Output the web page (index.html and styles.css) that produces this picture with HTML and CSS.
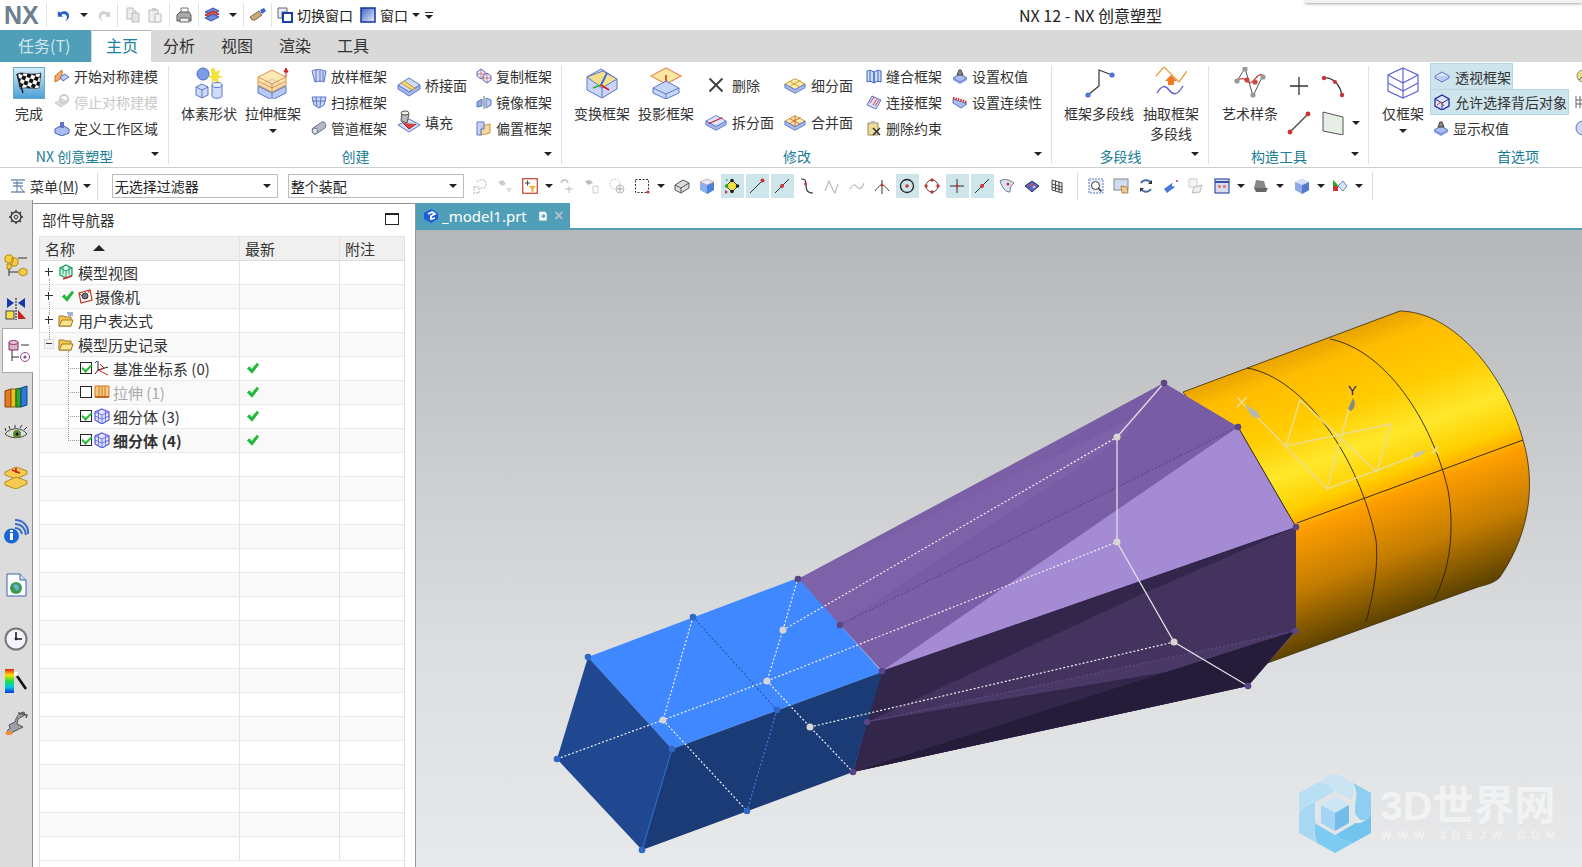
FILE: index.html
```html
<!DOCTYPE html>
<html lang="zh-CN">
<head>
<meta charset="utf-8">
<title>NX 12 - NX 创意塑型</title>
<link rel="stylesheet" href="styles.css">
</head>
<body>
<svg class="sprite" xmlns="http://www.w3.org/2000/svg">
<defs>
<linearGradient id="gflag" x1="0" y1="0" x2="0" y2="1"><stop offset="0" stop-color="#d4eef8"/><stop offset="1" stop-color="#4c9fd6"/></linearGradient>
<linearGradient id="gwin" x1="0" y1="0" x2="1" y2="1"><stop offset="0" stop-color="#3f63c8"/><stop offset="1" stop-color="#e8f2fb"/></linearGradient>
<linearGradient id="gspec" x1="0" y1="0" x2="0" y2="1"><stop offset="0" stop-color="#e02020"/><stop offset=".25" stop-color="#ffe000"/><stop offset=".5" stop-color="#20e040"/><stop offset=".75" stop-color="#00c8e8"/><stop offset="1" stop-color="#1030e0"/></linearGradient>
<pattern id="pchk" width="8" height="8" patternUnits="userSpaceOnUse" patternTransform="rotate(22)"><rect width="8" height="8" fill="#fff"/><rect width="4" height="4" fill="#111"/><rect x="4" y="4" width="4" height="4" fill="#111"/></pattern>
</defs>
<!-- quick access -->
<symbol id="undo" viewBox="0 0 16 16"><path d="M1 4v6h6L5 8c2-2 5-1.500 6 1s0 5-2 6c4-1 6-5 4-9-2-3-6-3-9-1z" fill="#2a62c4"/></symbol>
<symbol id="redo" viewBox="0 0 16 16"><path d="M15 4v6H9l2-2c-2-2-5-1.500-6 1s0 5 2 6c-4-1-6-5-4-9 2-3 6-3 9-1z" fill="#d0d0d0"/></symbol>
<symbol id="copy" viewBox="0 0 16 16"><path d="M2 1h6v3h3v8H2z" fill="#eee" stroke="#bbb"/><path d="M7 6h7v9H7z" fill="#e4e4e4" stroke="#bbb"/></symbol>
<symbol id="paste" viewBox="0 0 16 16"><path d="M2 3h9v12H2z" fill="#eee" stroke="#bbb"/><path d="M5 1h4v3H5z" fill="#ccc"/><path d="M8 7h6v8H8z" fill="#f4f4f4" stroke="#bbb"/></symbol>
<symbol id="print" viewBox="0 0 16 16"><path d="M5 1h7v5H5z" fill="#fff" stroke="#777"/><path d="M1 8l3-3h9l2 3v6H1z" fill="#aaa" stroke="#555"/><path d="M4 11h9v4H4z" fill="#eee" stroke="#666"/></symbol>
<symbol id="stack" viewBox="0 0 16 16"><path d="M1 5l8-4 6 3-8 4z" fill="#6c8be0" stroke="#3350a8"/><path d="M1 8l8-4 6 3-8 4z" fill="#e0564a" stroke="#a22"/><path d="M1 11l8-4 6 3-8 4z" fill="#6c8be0" stroke="#3350a8"/></symbol>
<symbol id="brush" viewBox="0 0 18 16"><path d="M1 10l9-6 3 4-7 5H3z" fill="#c9a878" stroke="#7c6a50"/><path d="M11 3l4-2 2 3-4 3z" fill="#3b63cf"/></symbol>
<symbol id="switch" viewBox="0 0 16 16"><path d="M1 1h9v4H5v6H1z" fill="#e8eef8" stroke="#666"/><path d="M6 6h9v9H6z" fill="#fff" stroke="#1640b0" stroke-width="2"/></symbol>
<symbol id="win" viewBox="0 0 16 16"><rect x="1" y="1" width="14" height="14" fill="url(#gwin)" stroke="#1133a0" stroke-width="1.500"/></symbol>
<!-- ribbon large -->
<symbol id="flag" viewBox="0 0 32 32"><rect x=".5" y=".5" width="31" height="31" fill="url(#gflag)" stroke="#69aacb"/><path d="M4 7c6-3 11 2 24-1l-2 15c-8 2-13-2-19 1z" fill="url(#pchk)" stroke="#222" stroke-width=".6"/><path d="M4 7l6 19" stroke="#222" stroke-width="1.500"/></symbol>
<symbol id="prim" viewBox="0 0 32 32"><circle cx="10" cy="7" r="6" fill="#7c9ce6" stroke="#4a66bb"/><path d="M21 0l1.500 5 5-2-2.500 5 5 2-5 1.500 1.500 5-5-3-3 3 .5-5-4-2 4-1.500-1.500-5z" fill="#f3e23c"/><path d="M3 20l6-3 6 3v8l-6 3-6-3z" fill="#cddaf8" stroke="#5d76c8"/><path d="M3 20l6 3 6-3M9 23v8" fill="none" stroke="#5d76c8"/><path d="M19 18v11c0 3 10 3 10 0V18z" fill="#cfdcf8" stroke="#5d76c8"/><ellipse cx="24" cy="18" rx="5" ry="2.500" fill="#e8effc" stroke="#5d76c8"/></symbol>
<symbol id="extr" viewBox="0 0 32 32"><path d="M1 19l14-7 14 7v7l-14 7-14-7z" fill="#b8c9f5" stroke="#5d76c8"/><path d="M1 19l14 7 14-7M15 26v7" fill="none" stroke="#5d76c8"/><path d="M1 10l14-7 14 7v8l-14 7-14-7z" fill="#fbe4a4" fill-opacity=".8" stroke="#e0904a"/><path d="M1 10l14 7 14-7M15 17v8" fill="none" stroke="#e0904a"/><path d="M1 14l14 7 14-7" fill="none" stroke="#e0904a"/><path d="M29 10V4M27 5l2-4 2 4z" stroke="#d02020" fill="#d02020"/></symbol>
<symbol id="xform" viewBox="0 0 32 32"><path d="M1 10l14-8 16 10v10l-15 9-15-8z" fill="#c9d6f8" stroke="#5d76c8"/><path d="M1 10l15 11 15-9-14-8z" fill="#f4e08a" stroke="#5d76c8"/><path d="M16 21v10" stroke="#5d76c8"/><path d="M15 18l6-12" stroke="#3868d8" stroke-width="1.800"/><path d="M15 18l-8 3" stroke="#39a83c" stroke-width="1.800"/><path d="M15 18l8 5" stroke="#d02020" stroke-width="1.800"/></symbol>
<symbol id="proj" viewBox="0 0 32 32"><path d="M1 9l15-8 15 8-15 8z" fill="#f8e8a0" stroke="#e89068" stroke-width="1.400"/><path d="M16 8v16" stroke="#d02020" stroke-width="1.500"/><circle cx="16" cy="17" r="1.800" fill="#d02020"/><path d="M3 21l13-7 13 7v5l-13 6-13-6z" fill="#c6d6fa" stroke="#5d76c8"/><path d="M3 21l13 6 13-6M16 27v5" fill="none" stroke="#5d76c8"/></symbol>
<symbol id="poly" viewBox="0 0 32 32"><path d="M5 28L16 19V3l13 5" fill="none" stroke="#333" stroke-width="1.200"/><circle cx="5" cy="28" r="2.600" fill="#5570d8"/><circle cx="29" cy="8" r="2.600" fill="#5570d8"/></symbol>
<symbol id="extractp" viewBox="0 0 32 32"><path d="M1 9l8-9 15 15L32 4" fill="none" stroke="#f0a040" stroke-width="1.400"/><path d="M2 26c5-8 8-8 12-3s8 6 14-4" fill="none" stroke="#5d60d0" stroke-width="1.400"/><path d="M13 18v-4h-3l6-6 6 6h-3v4z" fill="#f07820"/></symbol>
<symbol id="spline" viewBox="0 0 32 32"><path d="M3 14L11 1l4 14 4 14 10-21" fill="none" stroke="#555"/><path d="M3 14c3-3 6-3 9-1s4 5 8 0 6-6 9-5" fill="none" stroke="#c33" stroke-width="1.200"/><circle cx="3" cy="14" r="2.600" fill="#999"/><circle cx="11" cy="2" r="2.600" fill="#999"/><circle cx="13" cy="13" r="2.600" fill="#c44"/><circle cx="21" cy="15" r="2.600" fill="#c44"/><circle cx="19" cy="28" r="2.600" fill="#999"/><circle cx="29" cy="10" r="2.600" fill="#999"/></symbol>
<symbol id="cage" viewBox="0 0 32 32"><path d="M16 1l15 7v16l-15 7-15-7V8zM1 8l15 8 15-8M16 16v15M1 16l15 8 15-8M16 1v15" fill="none" stroke="#6266d8" stroke-width="1.200"/></symbol>
<!-- ribbon small -->
<symbol id="symon" viewBox="0 0 16 16"><path d="M1 8l7-6v8l-7 4z" fill="#f5a868" stroke="#d06f20"/><path d="M6 9l5-3 4 3-6 4z" fill="#b9caf4" stroke="#5d76c8"/></symbol>
<symbol id="symoff" viewBox="0 0 16 16"><path d="M1 9l7-4 6 3-7 5z" fill="#ddd" stroke="#ccc"/><circle cx="10" cy="5" r="4" fill="none" stroke="#ccc" stroke-width="2"/></symbol>
<symbol id="workarea" viewBox="0 0 16 16"><path d="M1 9l7-4 7 4v4l-7 3-7-3z" fill="#a9bdf0" stroke="#4b64b8"/><path d="M6 2h4v6H6z" fill="#5d76c8"/></symbol>
<symbol id="loft" viewBox="0 0 16 16"><path d="M1 3c4-2 7-2 14 0l-2 11c-3-1-6-1-9 0z" fill="#ccd8f6" stroke="#5d76c8"/><path d="M5 2v12M9 2v12M12 3v11" stroke="#5d76c8" fill="none"/></symbol>
<symbol id="sweep" viewBox="0 0 16 16"><path d="M1 3h14l-2 8-5 3-5-3z" fill="#ccd8f6" stroke="#5d76c8"/><path d="M1 7h14M5 3l1 10M10 3l-1 10" stroke="#5d76c8" fill="none"/></symbol>
<symbol id="pipe" viewBox="0 0 16 16"><path d="M2 8l9-6c3-1 5 3 3 6l-9 6c-3 1-5-3-3-6z" fill="#b4b8c2" stroke="#6a7190"/><ellipse cx="4" cy="11" rx="2.500" ry="3" fill="#e6e9f3" stroke="#6a7190"/></symbol>
<symbol id="bridge" viewBox="0 0 24 24"><path d="M1 12l11-7 11 7-11 7z" fill="#cfdcf8" stroke="#5d76c8"/><path d="M1 12v4l11 7 11-7v-4l-11 7z" fill="#a5b9ee" stroke="#5d76c8"/><path d="M7 8l11 7-3 2L4 10z" fill="#f5d682" stroke="#c89a30"/></symbol>
<symbol id="fillx" viewBox="0 0 24 24"><path d="M1 15l11-6 11 6-11 7z" fill="#cfdcf8" stroke="#5d76c8"/><path d="M6 13l6 6 7-5" fill="#d84040" stroke="#b02020"/><path d="M5 2l7 2-2 9-6-2z" fill="#bbb" stroke="#555"/><ellipse cx="8" cy="3" rx="4" ry="2" fill="#eee" stroke="#555"/></symbol>
<symbol id="copyc" viewBox="0 0 16 16"><path d="M1 4l4-3 4 3v4l-4 3-4-3z" fill="#e8eefc" stroke="#5266c0"/><path d="M7 8l4-3 4 3v4l-4 3-4-3z" fill="#e8eefc" stroke="#5266c0"/><path d="M5 1v10M1 6h8M11 5v10M7 10h8" stroke="#d05050" stroke-width=".7"/></symbol>
<symbol id="mirror" viewBox="0 0 16 16"><path d="M1 8l5-3v7l-5 1z" fill="#94a9e2" stroke="#5d76c8"/><path d="M8 2v13" stroke="#666"/><path d="M10 4l5 2v5l-5 3z" fill="#b9caf4" stroke="#5d76c8"/></symbol>
<symbol id="offset" viewBox="0 0 16 16"><path d="M5 6l9-2v9l-9 2z" fill="#f5d8a0" stroke="#d09040"/><path d="M1 2h7v7H5v6H1z" fill="#b8c9f5" stroke="#5d76c8" fill-opacity=".8"/></symbol>
<symbol id="del" viewBox="0 0 16 16"><path d="M1.500 1.500l13 13M14.500 1.500l-13 13" stroke="#444" stroke-width="2"/></symbol>
<symbol id="split" viewBox="0 0 24 24"><path d="M1 11l11-6 11 6-11 6z" fill="#dbe6fb" stroke="#5d76c8"/><path d="M1 11v4l11 6 11-6v-4l-11 6z" fill="#a5b9ee" stroke="#5d76c8"/><path d="M4 14L19 7" stroke="#d02020" stroke-width="1.300"/></symbol>
<symbol id="subd" viewBox="0 0 24 24"><path d="M1 11l11-6 11 6-11 6z" fill="#fbe9a8" stroke="#c89a30"/><path d="M1 11v4l11 6 11-6v-4l-11 6z" fill="#a5b9ee" stroke="#5d76c8"/><path d="M6 8l11 6M7 13l11-6" stroke="#c89a30" fill="none"/></symbol>
<symbol id="merge" viewBox="0 0 24 24"><path d="M1 11l11-6 11 6-11 6z" fill="#fbe9a8" stroke="#c89a30"/><path d="M1 11v4l11 6 11-6v-4l-11 6z" fill="#a5b9ee" stroke="#5d76c8"/><path d="M6 8l11 6M7 13l11-6M12 5v12" stroke="#d06030" fill="none"/></symbol>
<symbol id="stitch" viewBox="0 0 16 16"><path d="M1 3c2-1 4-1 7 1v11c-3-2-5-2-7-1zM8 4c3-2 5-2 7-1v11c-2-1-4-1-7 1z" fill="#cfe0f8" stroke="#3a60c0"/><path d="M4 3v11M12 3v11" stroke="#3a60c0"/></symbol>
<symbol id="conn" viewBox="0 0 16 16"><path d="M1 11l5-9 9 4-5 9z" fill="#d4dcf6" stroke="#5d76c8"/><path d="M4 9l4-6M7 11l4-6M9 12l4-6" stroke="#d84a4a" fill="none"/></symbol>
<symbol id="rmc" viewBox="0 0 16 16"><path d="M2 3h10v12H2z" fill="#eedc9c" stroke="#9a8a4a"/><path d="M5 1h4v3H5z" fill="#bbb"/><path d="M7 8l7 7M14 8l-7 7" stroke="#333" stroke-width="1.600"/></symbol>
<symbol id="weight" viewBox="0 0 16 16"><path d="M1 10l7-4 7 4-7 4z" fill="#a9bdf0" stroke="#5d76c8"/><path d="M1 10v2l7 4 7-4v-2l-7 4z" fill="#7f98e0"/><path d="M5 7l2-5h2l2 5z" fill="#888" stroke="#444"/></symbol>
<symbol id="cont" viewBox="0 0 16 16"><path d="M1 5l9 3 5 2-6 4-8-5z" fill="#a9bdf0" stroke="#5d76c8"/><path d="M1 4l11 3 3 2" stroke="#d03030" stroke-width="2.500" stroke-dasharray="1.500 1" fill="none"/></symbol>
<symbol id="plus" viewBox="0 0 24 24"><path d="M12 3v18M3 12h18" stroke="#333" stroke-width="1.300"/></symbol>
<symbol id="arc" viewBox="0 0 24 24"><path d="M3 4c9-1 16 7 18 17" fill="none" stroke="#333" stroke-width="1.300"/><circle cx="3" cy="4" r="2.200" fill="#c33"/><circle cx="14" cy="8" r="2" fill="#c33"/><circle cx="21" cy="21" r="2.200" fill="#c33"/></symbol>
<symbol id="line" viewBox="0 0 24 24"><path d="M3 21L21 3" stroke="#444" stroke-width="1.300"/><circle cx="3" cy="21" r="2.400" fill="#c33"/><circle cx="21" cy="3" r="2.400" fill="#c33"/></symbol>
<symbol id="plane" viewBox="0 0 24 24"><path d="M2 1l20 5v18L2 20z" fill="#e6eee6" stroke="#555"/></symbol>
<symbol id="seeth" viewBox="0 0 16 16"><path d="M1 7l7-4 7 4-7 4z" fill="#dbe6fb" stroke="#5d76c8"/><path d="M1 7v2l7 4 7-4V7" fill="#bccdf6" stroke="#5d76c8"/></symbol>
<symbol id="allow" viewBox="0 0 16 16"><path d="M8 1l7 4v7l-7 4-7-4V5z" fill="#dbe6fb" stroke="#2a2a9a" stroke-width="1.300"/><path d="M1 5l7 4 7-4M8 9v7" fill="none" stroke="#2a2a9a"/><path d="M3 11l4-3 3 4" stroke="#d03030" fill="none"/></symbol>
<symbol id="extra1" viewBox="0 0 16 16"><circle cx="8" cy="8" r="6" fill="#f0e080" stroke="#888"/><path d="M4 12l8-8" stroke="#3060c0"/></symbol>
<symbol id="extra2" viewBox="0 0 16 16"><path d="M1 2v12M5 2v12M9 2v12M13 2v12M1 6h12M1 10h12" stroke="#666" fill="none"/></symbol>
<symbol id="extra3" viewBox="0 0 16 16"><circle cx="8" cy="8" r="7" fill="#cdd8f4" stroke="#5d76c8"/></symbol>
<!-- selection bar -->
<symbol id="menui" viewBox="0 0 16 16"><path d="M1 2h14M3 5h10M3 8h10M1 14h14" stroke="#7894b4" stroke-width="1.400"/><path d="M7 3v11M10 9l4 5" stroke="#5878a0" fill="none"/></symbol>
<symbol id="g1" viewBox="0 0 16 16"><path d="M2 9h5v6H2zM5 4c3-3 8-3 9 1s-3 6-6 5" fill="none" stroke="#c8c8c8" stroke-width="1.400" stroke-dasharray="2 1"/></symbol>
<symbol id="g2" viewBox="0 0 16 16"><path d="M1 4l5-2 3 4-4 2z" fill="#ccc"/><path d="M9 10h6l-3 5z" fill="#ddd"/></symbol>
<symbol id="filter" viewBox="0 0 16 16"><rect x=".7" y=".7" width="14.600" height="14.600" fill="#fff" stroke="#c85040" stroke-width="1.300"/><path d="M3 5h5M5.500 2.500v5" stroke="#444"/><path d="M7 8h7l-2.500 3v3h-2v-3z" fill="#f0b030"/></symbol>
<symbol id="g3" viewBox="0 0 16 16"><path d="M2 5c1-4 6-4 7 0" fill="none" stroke="#bbb" stroke-width="1.400"/><path d="M10 8v7M6 11h8" stroke="#bbb"/></symbol>
<symbol id="g4" viewBox="0 0 16 16"><path d="M1 3l5-1 3 3-5 2z" fill="#bbb"/><path d="M9 8h5v7H9z" fill="none" stroke="#ccc"/></symbol>
<symbol id="g5" viewBox="0 0 16 16"><circle cx="6" cy="6" r="5" fill="none" stroke="#bbb" stroke-dasharray="1.500 1"/><circle cx="11" cy="11" r="4" fill="none" stroke="#bbb"/><path d="M11 8v6M8 11h6" stroke="#aaa"/></symbol>
<symbol id="rect" viewBox="0 0 16 16"><rect x="1.500" y="1.500" width="13" height="13" fill="none" stroke="#333" stroke-dasharray="2 1.500"/><circle cx="14" cy="14" r="1.600" fill="#c33"/></symbol>
<symbol id="part" viewBox="0 0 16 16"><path d="M1 7l8-5 6 3v5l-8 5-6-3z" fill="#ddd" stroke="#555"/><path d="M1 7l6 3 8-5M7 10v5" fill="none" stroke="#555"/></symbol>
<symbol id="cube" viewBox="0 0 16 16"><path d="M8 1l7 3v8l-7 4-7-4V4z" fill="#8ab0ec"/><path d="M8 7l7-3v8l-7 4z" fill="#4d80d8"/><path d="M8 1l7 3-7 3-7-3z" fill="#e0ecfb" stroke="#e08080" stroke-width=".6"/></symbol>
<symbol id="nodes" viewBox="0 0 16 16"><path d="M8 2l6 6-6 6-6-6z" fill="#f0e040" stroke="#444"/><circle cx="8" cy="2.500" r="1.800" fill="#222"/><circle cx="13.500" cy="8" r="1.800" fill="#222"/><circle cx="8" cy="13.500" r="1.800" fill="#222"/><circle cx="2.500" cy="8" r="1.800" fill="#2a2"/><path d="M1 2l2-1 1 2z" fill="#2a2"/><path d="M1 12l3 2-3 2z" fill="#c33"/></symbol>
<symbol id="lend" viewBox="0 0 16 16"><path d="M1 15L14 2" stroke="#333"/><circle cx="13.500" cy="2.500" r="2" fill="#c33"/></symbol>
<symbol id="lmid" viewBox="0 0 16 16"><path d="M1 15L15 1" stroke="#333"/><circle cx="8" cy="8" r="2" fill="#c33"/></symbol>
<symbol id="scurve" viewBox="0 0 16 16"><path d="M2 1c4 0 5 1 5 6s1 8 7 8" fill="none" stroke="#333" stroke-width="1.200"/><circle cx="6.500" cy="6" r="1.400" fill="#c33"/></symbol>
<symbol id="gspl" viewBox="0 0 16 16"><path d="M1 13L5 3l4 9 2 3 3-9" fill="none" stroke="#bbb" stroke-width="1.200"/></symbol>
<symbol id="gwave" viewBox="0 0 16 16"><path d="M1 11c3-5 5-5 7-2s5 2 7-4" fill="none" stroke="#bbb" stroke-width="1.200"/></symbol>
<symbol id="tang" viewBox="0 0 16 16"><path d="M1 13c3-4 5-6 7-6s4 2 7 6M8 2v14" fill="none" stroke="#333"/><circle cx="8" cy="7" r="1.400" fill="#c33"/></symbol>
<symbol id="cdot" viewBox="0 0 16 16"><circle cx="8" cy="8" r="6.500" fill="none" stroke="#222" stroke-width="1.300"/><circle cx="8" cy="8" r="1.800" fill="#c33"/></symbol>
<symbol id="c4" viewBox="0 0 16 16"><circle cx="8" cy="8" r="6" fill="none" stroke="#444"/><circle cx="8" cy="2" r="1.700" fill="#c33"/><circle cx="14" cy="8" r="1.700" fill="#c33"/><circle cx="8" cy="14" r="1.700" fill="#c33"/><circle cx="2" cy="8" r="1.700" fill="#c33"/></symbol>
<symbol id="cross" viewBox="0 0 16 16"><path d="M8 1v14M1 8h14" stroke="#333"/><circle cx="8" cy="8" r="1.500" fill="#c33"/></symbol>
<symbol id="surf" viewBox="0 0 16 16"><path d="M1 3c5-3 10-1 14 2-3 2-4 5-4 9-5 0-8-5-10-11z" fill="#d8e2f8" stroke="#777"/><circle cx="9" cy="6" r="1.500" fill="#c33"/></symbol>
<symbol id="surf2" viewBox="0 0 16 16"><path d="M8 3l7 5-7 6-7-6z" fill="#5568c8" stroke="#334"/><circle cx="7" cy="7" r="1.300" fill="#d44"/><circle cx="10" cy="9" r="1.300" fill="#f0c0c0"/></symbol>
<symbol id="grid" viewBox="0 0 16 16"><path d="M3 2l10 3v10L3 12zM3 6l10 3M3 9l10 3M6.500 3v10M10 4v10" fill="#f2f2f2" stroke="#444"/></symbol>
<symbol id="zoomf" viewBox="0 0 16 16"><rect x="1" y="1" width="14" height="14" fill="#e8eefc" stroke="#6a7fc0" stroke-dasharray="2 1"/><circle cx="7.500" cy="7.500" r="4" fill="#fff" stroke="#333"/><path d="M10.500 10.500l3 3" stroke="#333" stroke-width="1.500"/></symbol>
<symbol id="hand" viewBox="0 0 16 16"><rect x="1" y="1" width="14" height="11" fill="#cfdcf4" stroke="#888"/><path d="M8 8l6 1 1 6H9z" fill="#eec890" stroke="#b08848"/></symbol>
<symbol id="rot" viewBox="0 0 16 16"><path d="M3 5a6 6 0 0 1 10 0M13 11a6 6 0 0 1-10 0" fill="none" stroke="#4a6ca8" stroke-width="2"/><path d="M14 2v4h-4zM2 14v-4h4z" fill="#333"/></symbol>
<symbol id="pan" viewBox="0 0 16 16"><path d="M1 11l8-6 3 4-8 6z" fill="#4a78d8"/><path d="M9 5l3 4-3-1z" fill="#fff"/><circle cx="14" cy="3" r="1" fill="#c33"/></symbol>
<symbol id="gviews" viewBox="0 0 16 16"><path d="M1 1h8v8H1z" fill="#f4f4f4" stroke="#ccc"/><path d="M6 9l8-2-2 7-8 1z" fill="#eee" stroke="#bbb"/></symbol>
<symbol id="layout" viewBox="0 0 16 16"><rect x="1" y="1" width="14" height="14" fill="#d8dff0" stroke="#3a50a0" stroke-width="1.200"/><path d="M1 4h14" stroke="#3a50a0" stroke-width="2"/><path d="M4 7h3v3H4zM9 7h3v3H9z" fill="#d88"/></symbol>
<symbol id="clip" viewBox="0 0 16 16"><path d="M3 2l8 1 2 7H1z" fill="#888"/><path d="M1 10h14l-2 4H3z" fill="#666"/></symbol>
<symbol id="rendr" viewBox="0 0 16 16"><path d="M8 1l7 3v8l-7 4-7-4V4z" fill="#8fa8e4"/><path d="M8 7l7-3v8l-7 4z" fill="#5878cc"/><path d="M8 1l7 3-7 3-7-3z" fill="#d6e2fa"/></symbol>
<symbol id="showh" viewBox="0 0 16 16"><path d="M1 2l5 5-5 6z" fill="#2a2"/><path d="M1 8h5v5H1z" fill="#c33"/><path d="M6 8l5-5 4 5-4 5z" fill="#d6e2fa" stroke="#6a7fc0"/></symbol>
<!-- tree -->
<symbol id="viewsm" viewBox="0 0 16 16"><path d="M8 1l6 3v7l-6 3-6-3V4z" fill="#e4f5ea" stroke="#1aa066" stroke-width="1.300"/><path d="M2 4l6 3 6-3M8 7v7M5 2.500v8M11 2.500v8" fill="none" stroke="#1aa066"/><path d="M5 15l9-3" stroke="#d83020" stroke-width="1.500"/></symbol>
<symbol id="chk" viewBox="0 0 16 16"><path d="M1 8.500L4 6l2.500 3 6-7L15 4 7 14.500z" fill="#22b83a"/></symbol>
<symbol id="cam" viewBox="0 0 16 16"><path d="M2 5l11-3 2 10-11 3z" fill="#fff" stroke="#c83020" stroke-width="1.200"/><circle cx="8" cy="8" r="3" fill="#778" stroke="#334"/><path d="M2 5l3 3M13 2l-2 3" stroke="#c83020"/></symbol>
<symbol id="fold" viewBox="0 0 16 16"><path d="M1 4h5l1 1h6v9H1z" fill="#f6c850" stroke="#a07820"/><path d="M1 14l3-6h11l-2 6z" fill="#fce48c" stroke="#a07820"/><path d="M9 1h6M10 3h5" stroke="#5060a0"/></symbol>
<symbol id="foldo" viewBox="0 0 16 16"><path d="M1 4h5l1 1h6v9H1z" fill="#f6c850" stroke="#a07820"/><path d="M1 14l3-6h11l-2 6z" fill="#fce48c" stroke="#a07820"/></symbol>
<symbol id="csys" viewBox="0 0 16 16"><path d="M4 1v9l-3 4M4 10l10-3" fill="none" stroke="#222"/><path d="M4 10l6 3 4 2M6 4l4 4-4 2" fill="none" stroke="#d02020"/><path d="M1 3l2-2" stroke="#3050c0"/></symbol>
<symbol id="extrsm" viewBox="0 0 16 16"><path d="M1 2h14v11H1z" fill="#f6cc80" stroke="#d07820"/><path d="M5 2v11M8 2v11M11 2v11" stroke="#d07820"/><path d="M1 13h14" stroke="#c05010" stroke-width="1.500"/></symbol>
<symbol id="subbody" viewBox="0 0 16 16"><path d="M8 1l7 3v8l-7 4-7-4V4z" fill="#dfe4fb" stroke="#5a5ad8" stroke-width="1.200"/><path d="M1 4l7 3 7-3M8 7v9M4.500 2.500v11M11.500 2.500v11M1 8l7 3 7-3" fill="none" stroke="#5a5ad8" stroke-width=".8"/></symbol>
<symbol id="model" viewBox="0 0 16 16"><path d="M8 1l7 4v6l-7 4-7-4V5z" fill="#1d5ce0"/><path d="M5 6l4-2 3 2-4 2v3l4-1" fill="none" stroke="#fff" stroke-width="1.800"/></symbol>
<symbol id="docmark" viewBox="0 0 16 16"><path d="M2 1h9l3 3v11H2z" fill="#fff"/><path d="M5 8h6M8 5l3 3-3 3" fill="none" stroke="#4f9fb8" stroke-width="2"/></symbol>
<!-- rail -->
<symbol id="gear" viewBox="0 0 16 16"><circle cx="8" cy="8" r="5" fill="none" stroke="#333" stroke-width="1.400"/><circle cx="8" cy="8" r="1.800" fill="none" stroke="#333"/><path d="M8 1v2M8 13v2M1 8h2M13 8h2M3 3l1.500 1.500M11.500 11.500L13 13M13 3l-1.500 1.500M4.500 11.500L3 13" stroke="#333" stroke-width="1.400"/></symbol>
<symbol id="r-asm" viewBox="0 0 24 24"><path d="M3 2h4l2 2v4l-2 2H3L1 8V4zM8 5h4l2 2v4l-2 2H8zM3 11h4v5H3z" fill="#f4cc44" stroke="#b08818"/><path d="M5 16v7M5 19h9M14 5h9" stroke="#333"/><path d="M15 17l4-2 4 2v4l-4 2-4-2z" fill="#f4cc44" stroke="#b08818"/></symbol>
<symbol id="r-con" viewBox="0 0 24 24"><path d="M3 1l7 5-7 5zM21 1l-7 5 7 5z" fill="#1838b0"/><path d="M12 1v22" stroke="#111" stroke-dasharray="2 1"/><rect x="2" y="14" width="8" height="8" fill="#f0e050" stroke="#444"/><path d="M14 22l8 0-8-9z" fill="#c82020"/></symbol>
<symbol id="r-nav" viewBox="0 0 24 24"><path d="M3 3h9v8H3z" fill="#d8b4cc" stroke="#8a3060"/><ellipse cx="7.500" cy="3.500" rx="4.500" ry="2" fill="#e8c8dc" stroke="#8a3060"/><path d="M6 11v11M6 18h7M15 6h8" stroke="#333"/><circle cx="19" cy="18" r="4.500" fill="#fff" stroke="#8a4a8a"/><circle cx="19" cy="18" r="1.600" fill="#8a4a8a"/></symbol>
<symbol id="r-books" viewBox="0 0 24 24"><path d="M1 6l6-2v18H1z" fill="#e87820" stroke="#884010"/><path d="M7 4h5v18H7z" fill="#e8c020" stroke="#886010"/><path d="M12 4l5-1v19h-5z" fill="#30a830" stroke="#106010"/><path d="M17 3l6-2v19l-6 2z" fill="#3078d8" stroke="#104888"/></symbol>
<symbol id="r-eye" viewBox="0 0 24 16"><path d="M1 9c5-7 17-7 22 0-6 5-16 5-22 0z" fill="#dde0d6" stroke="#444"/><circle cx="13" cy="9" r="4" fill="#5c8a30"/><circle cx="13" cy="9" r="1.500" fill="#111"/><path d="M2 6L1 3M6 4L5 1M11 3V0M16 3l2-3M20 5l3-3" stroke="#333"/></symbol>
<symbol id="r-slabs" viewBox="0 0 24 24"><path d="M1 7l11-5 11 4v3l-11 5-11-4z" fill="#f6cc50" stroke="#b88820"/><path d="M1 17l11-5 11 4v3l-11 5-11-4z" fill="#f6cc50" stroke="#b88820"/><path d="M8 5l8 3M12 3v5" stroke="#d02020" stroke-width="1.600"/></symbol>
<symbol id="r-info" viewBox="0 0 26 26"><circle cx="8.500" cy="17" r="7.500" fill="#1a66d8"/><path d="M7 14h3v7H7zM7 11h3v2H7z" fill="#fff"/><path d="M12 5c6 0 10 4 11 11M12 1c8 0 14 6 13 14M12 9c4 0 6 2 7 6" fill="none" stroke="#3a70c8" stroke-width="2"/></symbol>
<symbol id="r-doc" viewBox="0 0 24 24"><path d="M3 1h13l6 6v16H3z" fill="#fff" stroke="#3a60b0"/><path d="M16 1v6h6" fill="#cde" stroke="#3a60b0"/><circle cx="12" cy="15" r="6" fill="#3a9a50"/><path d="M9 12c3-2 6 0 6 3s-3 3-4 1z" fill="#6ab0d8"/></symbol>
<symbol id="r-clock" viewBox="0 0 24 24"><circle cx="12" cy="12" r="10.500" fill="#f2f6fb" stroke="#777" stroke-width="2"/><path d="M12 5v7h6" fill="none" stroke="#222" stroke-width="1.600"/><circle cx="12" cy="12" r="1.400" fill="#222"/></symbol>
<symbol id="r-color" viewBox="0 0 24 24"><rect x="1" y="0" width="9" height="24" fill="url(#gspec)"/><path d="M13 7l9 13" stroke="#111" stroke-width="2.600"/><circle cx="12" cy="5" r="2" fill="#fff"/></symbol>
<symbol id="r-tools" viewBox="0 0 24 24"><path d="M20 1c-6 1-8 6-9 10l-6 3 1 3-3 3 4 2 12-6-6-3 1-5 7-4z" fill="#9aa0aa" stroke="#555"/><path d="M14 2l9 2-1 3" fill="none" stroke="#555" stroke-width="1.400"/><ellipse cx="5" cy="22" rx="3.500" ry="2" fill="#f0902c"/></symbol>
</svg>

<div class="app">
  <div class="top-shadow"></div>
  <header class="titlebar">
    <span class="nx">NX</span>
    <span class="sep ml7"></span>
    <svg class="ic14 ml10"><use href="#undo"/></svg>
    <span class="caret ml9"></span>
    <svg class="ic14 ml9"><use href="#redo"/></svg>
    <span class="sep ml6"></span>
    <svg class="ic16 ml7"><use href="#copy"/></svg>
    <svg class="ic16 ml6"><use href="#paste"/></svg>
    <span class="sep ml6"></span>
    <svg class="ic16 ml6"><use href="#print"/></svg>
    <span class="sep ml6"></span>
    <svg class="ic16 ml5"><use href="#stack"/></svg>
    <span class="caret ml9"></span>
    <span class="sep ml6"></span>
    <svg class="ic18 ml5"><use href="#brush"/></svg>
    <span class="sep ml4"></span>
    <svg class="ic16 ml5"><use href="#switch"/></svg>
    <span class="qat-text ml4">切换窗口</span>
    <svg class="ic16 ml7"><use href="#win"/></svg>
    <span class="qat-text ml4">窗口</span>
    <span class="caret ml4"></span>
    <span class="overflow ml5"></span>
    <span class="title">NX 12 - NX 创意塑型</span>
  </header>

  <nav class="tabs">
    <div class="tab-task">任务(T)</div>
    <div class="tab tab-home">主页</div>
    <div class="tab">分析</div>
    <div class="tab">视图</div>
    <div class="tab">渲染</div>
    <div class="tab">工具</div>
  </nav>

  <section class="ribbon">
    <div class="group g-nx">
      <div class="group-body">
        <div class="big big-finish"><div class="big-ic"><svg class="ic32"><use href="#flag"/></svg></div><span>完成</span></div>
        <div class="col c26">
          <div class="row"><svg class="ic16"><use href="#symon"/></svg><span>开始对称建模</span></div>
          <div class="row off"><svg class="ic16"><use href="#symoff"/></svg><span>停止对称建模</span></div>
          <div class="row"><svg class="ic16"><use href="#workarea"/></svg><span>定义工作区域</span></div>
        </div>
      </div>
      <div class="foot foot-std"><span>NX 创意塑型</span><i class="caret foot-caret"></i></div>
    </div>

    <div class="group g-create">
      <div class="group-body">
        <div class="big ml8"><div class="big-ic"><svg class="ic32"><use href="#prim"/></svg></div><span>体素形状</span></div>
        <div class="big"><div class="big-ic"><svg class="ic32"><use href="#extr"/></svg></div><span>拉伸框架</span><i class="caret big-caret"></i></div>
        <div class="col c26 ml6">
          <div class="row"><svg class="ic16"><use href="#loft"/></svg><span>放样框架</span></div>
          <div class="row"><svg class="ic16"><use href="#sweep"/></svg><span>扫掠框架</span></div>
          <div class="row"><svg class="ic16"><use href="#pipe"/></svg><span>管道框架</span></div>
        </div>
        <div class="col c37 ml10">
          <div class="row"><svg class="ic24"><use href="#bridge"/></svg><span>桥接面</span></div>
          <div class="row"><svg class="ic24"><use href="#fillx"/></svg><span>填充</span></div>
        </div>
        <div class="col c26 ml9">
          <div class="row"><svg class="ic16"><use href="#copyc"/></svg><span>复制框架</span></div>
          <div class="row"><svg class="ic16"><use href="#mirror"/></svg><span>镜像框架</span></div>
          <div class="row"><svg class="ic16"><use href="#offset"/></svg><span>偏置框架</span></div>
        </div>
      </div>
      <div class="foot foot-std"><span>创建</span><i class="caret foot-caret"></i></div>
    </div>

    <div class="group g-modify">
      <div class="group-body">
        <div class="big ml8"><div class="big-ic"><svg class="ic32"><use href="#xform"/></svg></div><span>变换框架</span></div>
        <div class="big"><div class="big-ic"><svg class="ic32"><use href="#proj"/></svg></div><span>投影框架</span></div>
        <div class="col c37 ml7 w69">
          <div class="row gap5"><span class="slot22"><svg class="ic16"><use href="#del"/></svg></span><span>删除</span></div>
          <div class="row gap5"><svg class="ic22"><use href="#split"/></svg><span>拆分面</span></div>
        </div>
        <div class="col c37 ml10">
          <div class="row gap5"><svg class="ic22"><use href="#subd"/></svg><span>细分面</span></div>
          <div class="row gap5"><svg class="ic22"><use href="#merge"/></svg><span>合并面</span></div>
        </div>
        <div class="col c26 ml13">
          <div class="row"><svg class="ic16"><use href="#stitch"/></svg><span>缝合框架</span></div>
          <div class="row"><svg class="ic16"><use href="#conn"/></svg><span>连接框架</span></div>
          <div class="row"><svg class="ic16"><use href="#rmc"/></svg><span>删除约束</span></div>
        </div>
        <div class="col c26 ml10">
          <div class="row"><svg class="ic16"><use href="#weight"/></svg><span>设置权值</span></div>
          <div class="row"><svg class="ic16"><use href="#cont"/></svg><span>设置连续性</span></div>
        </div>
      </div>
      <div class="foot foot-std"><span>修改</span><i class="caret foot-caret"></i></div>
    </div>

    <div class="group g-poly">
      <div class="group-body">
        <div class="big big-w70 ml12"><div class="big-ic"><svg class="ic32"><use href="#poly"/></svg></div><span>框架多段线</span></div>
        <div class="big ml5"><div class="big-ic"><svg class="ic32"><use href="#extractp"/></svg></div><span>抽取框架</span><span>多段线</span></div>
      </div>
      <div class="foot foot-std"><span>多段线</span><i class="caret foot-caret"></i></div>
    </div>

    <div class="group g-cons">
      <div class="group-body">
        <div class="big ml9"><div class="big-ic"><svg class="ic32"><use href="#spline"/></svg></div><span>艺术样条</span></div>
        <div class="tools-grid">
          <svg class="ic24"><use href="#plus"/></svg>
          <svg class="ic24"><use href="#arc"/></svg>
          <span></span>
          <svg class="ic24"><use href="#line"/></svg>
          <svg class="ic24"><use href="#plane"/></svg>
          <i class="caret"></i>
        </div>
      </div>
      <div class="foot foot-std"><span>构造工具</span><i class="caret foot-caret"></i></div>
    </div>

    <div class="group g-pref">
      <div class="group-body">
        <div class="big big-w50 ml9"><div class="big-ic"><svg class="ic32"><use href="#cage"/></svg></div><span>仅框架</span><i class="caret big-caret"></i></div>
        <div class="col c26 ml2 pref-col">
          <div class="row on on1"><svg class="ic16"><use href="#seeth"/></svg><span>透视框架</span></div>
          <div class="row on"><svg class="ic16"><use href="#allow"/></svg><span>允许选择背后对象</span></div>
          <div class="row plain"><svg class="ic16"><use href="#weight"/></svg><span>显示权值</span></div>
        </div>
        <div class="col c26 ml6">
          <div class="row"><svg class="ic16"><use href="#extra1"/></svg></div>
          <div class="row"><svg class="ic16"><use href="#extra2"/></svg></div>
          <div class="row"><svg class="ic16"><use href="#extra3"/></svg></div>
        </div>
      </div>
      <div class="foot foot-pref"><span>首选项</span></div>
    </div>
  </section>

  <section class="toolbar">
    <svg class="ic16 ml10"><use href="#menui"/></svg>
    <span class="menu-text ml4">菜单(<u>M</u>)</span>
    <span class="caret ml4"></span>
    <span class="sep sep-tb ml6"></span>
    <div class="select s1"><span>无选择过滤器</span><i class="caret"></i></div>
    <div class="select s2"><span>整个装配</span><i class="caret"></i></div>
    <div class="ti ml4"><svg class="ic16"><use href="#g1"/></svg></div>
    <div class="ti"><svg class="ic16"><use href="#g2"/></svg></div>
    <div class="ti"><svg class="ic16"><use href="#filter"/></svg></div>
    <div class="ta"><i class="caret"></i></div>
    <div class="ti"><svg class="ic16"><use href="#g3"/></svg></div>
    <div class="ti"><svg class="ic16"><use href="#g4"/></svg></div>
    <div class="ti"><svg class="ic16"><use href="#g5"/></svg></div>
    <div class="ti"><svg class="ic16"><use href="#rect"/></svg></div>
    <div class="ta"><i class="caret"></i></div>
    <div class="ti ml3"><svg class="ic16"><use href="#part"/></svg></div>
    <div class="ti"><svg class="ic16"><use href="#cube"/></svg></div>
    <div class="ti act"><svg class="ic18"><use href="#nodes"/></svg></div>
    <div class="ti act"><svg class="ic16"><use href="#lend"/></svg></div>
    <div class="ti act"><svg class="ic16"><use href="#lmid"/></svg></div>
    <div class="ti"><svg class="ic16"><use href="#scurve"/></svg></div>
    <div class="ti"><svg class="ic16"><use href="#gspl"/></svg></div>
    <div class="ti"><svg class="ic16"><use href="#gwave"/></svg></div>
    <div class="ti"><svg class="ic16"><use href="#tang"/></svg></div>
    <div class="ti act"><svg class="ic16"><use href="#cdot"/></svg></div>
    <div class="ti"><svg class="ic16"><use href="#c4"/></svg></div>
    <div class="ti act"><svg class="ic16"><use href="#cross"/></svg></div>
    <div class="ti act"><svg class="ic16"><use href="#lmid"/></svg></div>
    <div class="ti"><svg class="ic16"><use href="#surf"/></svg></div>
    <div class="ti"><svg class="ic16"><use href="#surf2"/></svg></div>
    <div class="ti"><svg class="ic16"><use href="#grid"/></svg></div>
    <span class="sep sep-tb ml7"></span>
    <div class="ti ml6"><svg class="ic16"><use href="#zoomf"/></svg></div>
    <div class="ti"><svg class="ic16"><use href="#hand"/></svg></div>
    <div class="ti"><svg class="ic16"><use href="#rot"/></svg></div>
    <div class="ti"><svg class="ic16"><use href="#pan"/></svg></div>
    <div class="ti"><svg class="ic16"><use href="#gviews"/></svg></div>
    <div class="ti ml1"><svg class="ic16"><use href="#layout"/></svg></div>
    <div class="ta"><i class="caret"></i></div>
    <div class="ti ml2"><svg class="ic16"><use href="#clip"/></svg></div>
    <div class="ta"><i class="caret"></i></div>
    <div class="ti ml4"><svg class="ic16"><use href="#rendr"/></svg></div>
    <div class="ta"><i class="caret"></i></div>
    <div class="ti ml1"><svg class="ic16"><use href="#showh"/></svg></div>
    <div class="ta"><i class="caret"></i></div>
    <span class="sep sep-tb ml7"></span>
  </section>

  <main class="main">
    <aside class="rail">
      <div class="rail-i"><svg class="ic16"><use href="#gear"/></svg></div>
      <div class="rail-i"><svg class="ic24"><use href="#r-asm"/></svg></div>
      <div class="rail-i"><svg class="ic24"><use href="#r-con"/></svg></div>
      <div></div>
      <div class="rail-i rail-active"><svg class="ic24"><use href="#r-nav"/></svg></div>
      <div class="rail-i"><svg class="ic24"><use href="#r-books"/></svg></div>
      <div class="rail-i"><svg class="ic24"><use href="#r-eye"/></svg></div>
      <div class="rail-i"><svg class="ic24"><use href="#r-slabs"/></svg></div>
      <div class="rail-i"><svg class="ic26"><use href="#r-info"/></svg></div>
      <div class="rail-i"><svg class="ic24"><use href="#r-doc"/></svg></div>
      <div class="rail-i"><svg class="ic24"><use href="#r-clock"/></svg></div>
      <div class="rail-i"><svg class="ic24"><use href="#r-color"/></svg></div>
      <div class="rail-i"><svg class="ic24"><use href="#r-tools"/></svg></div>
    </aside>

    <section class="panel">
      <div class="panel-head"><span>部件导航器</span><i class="maximize"></i></div>
      <div class="tree">
        <div class="tree-head">
          <div class="cell cell-name">名称<i class="sort"></i></div>
          <div class="cell">最新</div>
          <div class="cell">附注</div>
        </div>
        <div class="tree-body">
          <i class="vline vl-a"></i>
          <i class="vline vl-b"></i>
          <div class="tr"><div class="cell"><i class="exp"></i><i class="hd"></i><svg class="ic16"><use href="#viewsm"/></svg><span class="ml4">模型视图</span></div><div class="cell"></div><div class="cell"></div></div>
          <div class="tr"><div class="cell"><i class="exp"></i><svg class="ic14 ml7"><use href="#chk"/></svg><svg class="ic16 ml2"><use href="#cam"/></svg><span class="ml2">摄像机</span></div><div class="cell"></div><div class="cell"></div></div>
          <div class="tr"><div class="cell"><i class="exp"></i><i class="hd"></i><svg class="ic16"><use href="#fold"/></svg><span class="ml4">用户表达式</span></div><div class="cell"></div><div class="cell"></div></div>
          <div class="tr"><div class="cell"><i class="exp minus"></i><i class="hd"></i><svg class="ic16"><use href="#foldo"/></svg><span class="ml4">模型历史记录</span></div><div class="cell"></div><div class="cell"></div></div>
          <div class="tr"><div class="cell"><i class="hd2"></i><i class="cb on"></i><svg class="ic16 ml2"><use href="#csys"/></svg><span class="ml3">基准坐标系 (0)</span></div><div class="cell"><svg class="ic14 ok"><use href="#chk"/></svg></div><div class="cell"></div></div>
          <div class="tr"><div class="cell dim"><i class="hd2"></i><i class="cb"></i><svg class="ic16 ml2"><use href="#extrsm"/></svg><span class="ml3">拉伸 (1)</span></div><div class="cell"><svg class="ic14 ok"><use href="#chk"/></svg></div><div class="cell"></div></div>
          <div class="tr"><div class="cell"><i class="hd2"></i><i class="cb on"></i><svg class="ic16 ml2"><use href="#subbody"/></svg><span class="ml3">细分体 (3)</span></div><div class="cell"><svg class="ic14 ok"><use href="#chk"/></svg></div><div class="cell"></div></div>
          <div class="tr"><div class="cell strong"><i class="hd2"></i><i class="cb on"></i><svg class="ic16 ml2"><use href="#subbody"/></svg><span class="ml3">细分体 (4)</span></div><div class="cell"><svg class="ic14 ok"><use href="#chk"/></svg></div><div class="cell"></div></div>
          <div class="tr"><div class="cell"></div><div class="cell"></div><div class="cell"></div></div>
          <div class="tr"><div class="cell"></div><div class="cell"></div><div class="cell"></div></div>
          <div class="tr"><div class="cell"></div><div class="cell"></div><div class="cell"></div></div>
          <div class="tr"><div class="cell"></div><div class="cell"></div><div class="cell"></div></div>
          <div class="tr"><div class="cell"></div><div class="cell"></div><div class="cell"></div></div>
          <div class="tr"><div class="cell"></div><div class="cell"></div><div class="cell"></div></div>
          <div class="tr"><div class="cell"></div><div class="cell"></div><div class="cell"></div></div>
          <div class="tr"><div class="cell"></div><div class="cell"></div><div class="cell"></div></div>
          <div class="tr"><div class="cell"></div><div class="cell"></div><div class="cell"></div></div>
          <div class="tr"><div class="cell"></div><div class="cell"></div><div class="cell"></div></div>
          <div class="tr"><div class="cell"></div><div class="cell"></div><div class="cell"></div></div>
          <div class="tr"><div class="cell"></div><div class="cell"></div><div class="cell"></div></div>
          <div class="tr"><div class="cell"></div><div class="cell"></div><div class="cell"></div></div>
          <div class="tr"><div class="cell"></div><div class="cell"></div><div class="cell"></div></div>
          <div class="tr"><div class="cell"></div><div class="cell"></div><div class="cell"></div></div>
          <div class="tr"><div class="cell"></div><div class="cell"></div><div class="cell"></div></div>
          <div class="tr"><div class="cell"></div><div class="cell"></div><div class="cell"></div></div>
        </div>
      </div>
    </section>

    <section class="viewport">
      <div class="doc-strip">
        <div class="doc-tab"><svg class="ic16"><use href="#model"/></svg><span>_model1.prt</span><svg class="ic10"><use href="#docmark"/></svg><b>×</b></div>
      </div>
      <svg class="scene" viewBox="416 230 1166 637">
        <defs>
          <linearGradient id="gcyl" gradientUnits="userSpaceOnUse" x1="1290" y1="352" x2="1388" y2="618">
            <stop offset="0" stop-color="#e8a400"/><stop offset=".08" stop-color="#ffbc00"/><stop offset=".25" stop-color="#ffcc00"/><stop offset=".4" stop-color="#ffe82c"/><stop offset=".52" stop-color="#ffd000"/><stop offset=".575" stop-color="#ffb000"/><stop offset=".6" stop-color="#ff9e00"/><stop offset=".8" stop-color="#c47c00"/><stop offset="1" stop-color="#5f4400"/>
          </linearGradient>
        </defs>
        <!-- cylinder -->
        <path d="M1183 392L1400 311C1455 312 1505 375 1523 440C1535 480 1532 530 1500 577C1495 583 1485 585 1478 587L1262 665L1290 530Z" fill="url(#gcyl)" stroke="#3a2a08" stroke-width=".8"/>
        <path d="M1247 368C1305 378 1360 460 1376 540C1378 560 1376 585 1366 622" class="s-ring"/>
        <path d="M1330 339C1385 350 1432 420 1448 490C1455 530 1450 570 1434 600" class="s-ring"/>
        <path d="M1297 523L1523 440" class="s-ring"/>
        <!-- triad -->
        <g class="s-triad">
          <path d="M1255 415L1327 489L1350 405M1327 489L1415 456M1286 446L1300 400L1377 472L1391 424L1286 446"/>
          <path d="M1237 397l9 10M1247 397l-10 10M1431 446l8 8M1439 446l-8 8"/>
        </g>
        <path d="M1244 404l14 8 2 6-8-1z" fill="#b8b8a8"/>
        <path d="M1348 409l5-11 2 4-1 6-3 3z" fill="#8a8a88"/>
        <path d="M1414 453l13-3-9 7-4 0z" fill="#c4c4bc"/>
        <text x="1348" y="395" class="s-y">Y</text>

        <!-- purple body -->
        <path d="M798 579L1164 383L1238 427L1296 527L1296 631L1248 686L853 772L867 722L882 671Z" fill="#7a5fa6"/>
        <path d="M840 625L1238 427L1164 383L1100 418Z" fill="#785ca5"/>
        <path d="M840 625L1120 440L1164 383L1130 420L798 579Z" fill="#7d62a9"/>
        <path d="M882 671L1238 427L1296 527Z" fill="#a58bd3"/>
        <path d="M882 671L1296 527V631L867 722Z" fill="#44335f"/>
        <path d="M882 671L1296 527L1140 595L867 722Z" fill="#33264b"/>
        <path d="M867 722L1295 631L1248 686L853 772Z" fill="#33264b"/>
        <path d="M867 722L1295 631L1190 668Z" fill="#4a3966"/>
        <path d="M853 772L1295 631L1248 686Z" fill="#251c39"/>
        <path d="M1238 427L1296 527" class="s-ring"/>
        <!-- blue body -->
        <path d="M588 657L798 578L882 672L672 749Z" fill="#3f88ff"/>
        <path d="M588 657L672 749L642 850L557 759Z" fill="#1f4891"/>
        <path d="M672 749L882 672L853 772L642 850Z" fill="#1a3b76"/>
        <!-- cage lines -->
        <path d="M672 749L642 850" class="s-solid-blue"/>
        <path d="M693 617L777 710" class="s-dash s-d-blue"/>
        <path d="M777 710L747 811" class="s-dash s-d-lblue"/>
        <path d="M840 625L1238 427M867 722L1295 631" class="s-dash s-d-purple"/>
        <path d="M557 759L663 720L767 681L1117 542M783 630L1117 437M663 720L747 811M767 681L810 727L853 772M810 727L1174 642M693 617L663 720M798 578L783 630L767 681" class="s-dash"/>
        <path d="M1164 383L1117 437V542L1174 642L1248 686" class="s-cage"/>
        <!-- vertices -->
        <g class="s-v-blue"><circle cx="588" cy="657" r="3.300"/><circle cx="693" cy="617" r="3.300"/><circle cx="672" cy="749" r="3.300"/><circle cx="777" cy="710" r="3.300"/><circle cx="642" cy="850" r="3.300"/><circle cx="557" cy="759" r="3.300"/><circle cx="747" cy="811" r="3.300"/></g>
        <g class="s-v-purple"><circle cx="798" cy="579" r="3.300"/><circle cx="840" cy="625" r="3.300"/><circle cx="882" cy="671" r="3.300"/><circle cx="867" cy="722" r="3.300"/><circle cx="853" cy="772" r="3.300"/><circle cx="1164" cy="383" r="3.300"/><circle cx="1238" cy="427" r="3.300"/><circle cx="1296" cy="527" r="3.300"/><circle cx="1295" cy="631" r="3.300"/><circle cx="1248" cy="686" r="3.300"/></g>
        <g class="s-v-light"><circle cx="663" cy="720" r="3.500"/><circle cx="767" cy="681" r="3.500"/><circle cx="783" cy="630" r="3.500"/><circle cx="810" cy="727" r="3.500"/><circle cx="1117" cy="437" r="3.500"/><circle cx="1117" cy="542" r="3.500"/><circle cx="1174" cy="642" r="3.500"/></g>
        <!-- watermark -->
        <g>
          <path d="M1335 773L1353 783C1356 795 1350 805 1345 802L1335 793L1317 793C1312 788 1320 778 1335 773Z" fill="#cbe4f4"/>
          <path d="M1353 783L1371 793V813C1365 825 1358 820 1355 813V803C1358 795 1356 788 1353 783Z" fill="#8ecff1"/>
          <path d="M1371 813V833L1353 843C1343 842 1338 836 1335 833L1355 823C1362 824 1368 820 1371 813Z" fill="#72c3ee"/>
          <path d="M1353 843L1335 853L1317 843C1313 832 1315 826 1315 823L1335 833C1340 838 1346 843 1353 843Z" fill="#7ccbf2"/>
          <path d="M1317 843L1299 833V813C1305 805 1312 803 1315 803V823C1313 830 1314 838 1317 843Z" fill="#a7d7f3"/>
          <path d="M1299 813V793L1317 783C1328 782 1332 788 1335 793L1315 803C1308 803 1303 807 1299 813Z" fill="#b9dff4"/>
          <path d="M1335 791L1354 802V824L1335 835L1316 824V802Z" fill="#e2e5e8"/>
          <path d="M1335 797L1349 805L1335 813L1321 805Z" fill="#cbe6f7"/>
          <path d="M1321 805L1335 813V831L1321 823Z" fill="#a4d4f3"/>
          <path d="M1349 805L1335 813V831L1349 823Z" fill="#72bdea"/>
          <text x="1380" y="820" class="wm-big">3D世界网</text>
          <text x="1381" y="839" class="wm-small" textLength="174" lengthAdjust="spacing">WWW.3DSJW.COM</text>
        </g>
      </svg>
    </section>
  </main>
</div>
</body>
</html>
```

FILE: styles.css
```css
* { box-sizing: border-box; }
html, body { margin: 0; padding: 0; background: #fff; }
body { font-family: "Noto Sans CJK SC", "Noto Sans", "Liberation Sans", sans-serif; color: #333; font-size: 14px; overflow: hidden; }
.sprite { position: absolute; width: 0; height: 0; overflow: hidden; }
.app { position: relative; width: 1582px; height: 867px; display: flex; flex-direction: column; overflow: hidden; }
svg { flex: none; display: block; }
i { display: block; font-style: normal; flex: none; }
.ic10 { width: 10px; height: 10px; }
.ic14 { width: 14px; height: 14px; }
.ic16 { width: 16px; height: 16px; }
.ic18 { width: 18px; height: 16px; }
.ic22 { width: 22px; height: 22px; }
.ic24 { width: 24px; height: 24px; }
.ic26 { width: 26px; height: 26px; }
.ic32 { width: 32px; height: 32px; }
.ml1 { margin-left: 1px; } .ml2 { margin-left: 2px; } .ml3 { margin-left: 3px; } .ml4 { margin-left: 4px; }
.ml5 { margin-left: 5px; } .ml6 { margin-left: 6px; } .ml7 { margin-left: 7px; } .ml8 { margin-left: 8px; }
.ml9 { margin-left: 9px; } .ml10 { margin-left: 10px; } .ml12 { margin-left: 12px; } .ml13 { margin-left: 13px; }
.caret { display: inline-block; flex: none; width: 0; height: 0; border-left: 4px solid transparent; border-right: 4px solid transparent; border-top: 4px solid #222; }
.sep { display: block; flex: none; width: 1px; height: 24px; background: #e2e2e2; }
.sep-tb { height: 28px; background: #dcdcdc; }

.top-shadow { position: absolute; top: 0; right: 0; width: 277px; height: 3px; background: #f2f2f2; box-shadow: 0 1px 3px rgba(0,0,0,.35); }

.titlebar { height: 30px; flex: none; display: flex; align-items: center; padding-left: 4px; background: #fff; }
.nx { font: 700 25px/30px "Liberation Sans", sans-serif; color: #6c8091; width: 35px; }
.qat-text { font-size: 14px; line-height: 28px; color: #222; white-space: nowrap; }
.overflow { width: 8px; height: 7px; flex: none; border-top: 1px solid #222; position: relative; }
.overflow::after { content: ""; position: absolute; left: 0; top: 2px; border-left: 4px solid transparent; border-right: 4px solid transparent; border-top: 4px solid #222; }
.title { margin-left: 586px; font-size: 16px; line-height: 28px; color: #222; white-space: nowrap; }

.tabs { height: 32px; flex: none; display: flex; background: #d9d9d9; }
.tab-task { width: 91px; background: #4f9fb8; color: #cfe5ec; font-size: 16px; line-height: 31px; padding-left: 18px; margin-right: 1px; }
.tab { width: 58px; padding-left: 12px; font-size: 16px; line-height: 31px; color: #333; }
.tab-home { width: 59px; padding-left: 14px; background: #fff; color: #1f7f9f; border-top: 1px solid #b5b5b5; line-height: 29px; }

.ribbon { height: 106px; flex: none; display: flex; background: #fff; border-bottom: 1px solid #cfcfcf; overflow: hidden; }
.group { display: flex; flex-direction: column; flex: none; position: relative; }
.group::after { content: ""; position: absolute; right: 0; top: 4px; bottom: 3px; width: 1px; background: #e0e0e0; }
.g-nx { width: 169px; } .g-create { width: 393px; } .g-modify { width: 490px; } .g-poly { width: 157px; } .g-cons { width: 160px; }
.g-pref { width: 213px; overflow: hidden; }
.g-pref::after { display: none; }
.group-body { height: 82px; display: flex; flex: none; }
.big { width: 64px; flex: none; display: flex; flex-direction: column; align-items: center; padding-top: 4px; line-height: 20px; white-space: nowrap; }
.big-finish { width: 50px; margin-left: 4px; }
.big-w70 { width: 70px; } .big-w50 { width: 50px; }
.big-ic { height: 37px; flex: none; display: flex; justify-content: center; padding-top: 1px; }
.big-caret { margin-top: 6px; }
.col { display: flex; flex-direction: column; flex: none; }
.c26 { padding-top: 1px; }
.c26 .row { height: 26px; }
.c37 { padding-top: 4px; }
.c37 .row { height: 37px; }
.w69 { width: 69px; }
.row { display: flex; align-items: center; gap: 4px; white-space: nowrap; }
.gap5 { gap: 5px; }
.off { color: #c8c8c8; }
.slot22 { width: 22px; display: flex; justify-content: center; flex: none; }
.on { background: #cde4ec; border: 1px solid #b5d7e2; gap: 5px; padding-left: 3px; }
.on1 { width: 83px; border-bottom: none; }
.pref-col { width: 139px; }
.plain { gap: 4px; padding-left: 3px; }
.tools-grid { display: grid; grid-template-columns: 34px 34px 12px; grid-template-rows: 37px 37px; padding-top: 5px; justify-items: center; align-items: center; flex: none; }
.foot { height: 23px; flex: none; display: flex; align-items: center; justify-content: center; color: #1b7c97; position: relative; font-size: 14px; white-space: nowrap; }
.foot-std { padding-right: 20px; }
.foot-pref { padding-left: 85px; }
.foot-caret { position: absolute; right: 10px; top: 8px; }

.toolbar { height: 32px; flex: none; display: flex; align-items: center; background: #fff; padding-top: 3px; }
.menu-text { white-space: nowrap; color: #333; }
.select { height: 24px; flex: none; display: flex; align-items: center; justify-content: space-between; border: 1px solid #bdbdbd; padding: 0 6px 0 2px; background: #fff; color: #222; }
.s1 { width: 166px; margin-left: 14px; }
.s2 { width: 176px; margin-left: 10px; }
.ti { width: 25px; height: 24px; flex: none; display: flex; align-items: center; justify-content: center; }
.ta { width: 12px; height: 24px; flex: none; display: flex; align-items: center; justify-content: center; }
.act { background: #cfe5ec; border-left: 1px solid #fff; border-right: 1px solid #fff; }

.main { flex: 1; display: flex; min-height: 0; }
.rail { width: 33px; flex: none; background: #dcdcdc; border-right: 1px solid #909090; display: grid; grid-template-rows: 34px 62px 26px 6px 45px 48px 24px 64px 46px 60px 48px 36px 48px; }
.rail-i { display: flex; align-items: center; justify-content: center; }
.rail-active { background: #fff; border: 1px solid #a8a8a8; border-right: none; margin: 0 -1px 0 2px; position: relative; }

.panel { width: 382px; flex: none; margin-top: 3px; border-top: 1px solid #909090; background: #fff; display: flex; flex-direction: column; min-height: 0; }
.panel-head { height: 32px; flex: none; display: flex; align-items: center; justify-content: space-between; padding: 0 16px 2px 9px; font-size: 14.500px; color: #333; }
.maximize { width: 14px; height: 12px; border: 1px solid #222; border-top-width: 2px; }
.tree { margin-left: 6px; width: 366px; flex: 1; min-height: 0; overflow: hidden; border-left: 1px solid #e0e0e0; border-right: 1px solid #e0e0e0; display: flex; flex-direction: column; border-top: 1px solid #e4e4e4; }
.tree-head { height: 24px; flex: none; display: grid; grid-template-columns: 200px 100px 1fr; background: #f0f0f0; border-bottom: 1px solid #dcdcdc; font-size: 15px; color: #333; }
.tree-head .cell { padding-left: 5px; }
.cell { display: flex; align-items: center; border-right: 1px solid #e4e4e4; white-space: nowrap; min-width: 0; padding-bottom: 1px; }
.cell:last-child { border-right: none; }
.sort { margin-left: 18px; width: 0; height: 0; border-left: 6px solid transparent; border-right: 6px solid transparent; border-bottom: 6px solid #222; }
.tree-body { position: relative; flex: 1; min-height: 0; overflow: hidden; font-size: 15px; color: #333; }
.tr { height: 24px; display: grid; grid-template-columns: 200px 100px 1fr; border-bottom: 1px solid #eaeaea; background: #fff; }
.tr:nth-child(even) { background: #f9f9f9; }
.tr:nth-child(odd) { background: #fff; }
.vline { position: absolute; z-index: 1; width: 0; border-left: 1px dotted #999; }
.vl-a { left: 9px; top: 18px; height: 62px; }
.vl-b { left: 28px; top: 90px; height: 90px; }
.exp { position: relative; z-index: 2; width: 10px; height: 10px; margin-left: 4px; background: #fff; }
.exp::before { content: ""; position: absolute; left: 1px; top: 4px; width: 8px; height: 1px; background: #333; }
.exp::after { content: ""; position: absolute; left: 4px; top: 1px; width: 1px; height: 8px; background: #333; }
.exp.minus { background: #f4f4f4; border: 1px solid #ddd; }
.exp.minus::before { left: 1px; top: 3px; width: 6px; }
.exp.minus::after { display: none; }
.hd { width: 4px; flex: none; }
.hd2 { width: 9px; margin-left: 30px; margin-right: 1px; border-top: 1px dotted #999; }
.cb { position: relative; width: 12px; height: 12px; border: 1px solid #222; background: #fff; }
.cb.on::after { content: ""; position: absolute; left: 1px; top: 1px; width: 8px; height: 4px; border-left: 2.500px solid #22b83a; border-bottom: 2.500px solid #22b83a; transform: rotate(-45deg); }
.dim { color: #aaa; }
.strong { font-weight: 700; }
.ok { margin-left: 6px; }

.viewport { flex: 1; min-width: 0; margin-top: 3px; display: flex; flex-direction: column; border-left: 1px solid #8a9aa0; }
.doc-strip { height: 27px; flex: none; background: #fff; border-bottom: 2px solid #4f9fb8; }
.doc-tab { width: 154px; height: 25px; display: flex; align-items: center; background: #4f9fb8; color: #fff; padding-left: 7px; font-family: "Noto Sans", "Liberation Sans", sans-serif; font-size: 15px; }
.doc-tab span { margin-left: 3px; width: 96px; }
.doc-tab b { font: 700 16px/16px "Liberation Sans", sans-serif; color: #a8c4cc; margin-left: 6px; }
.scene { flex: 1; width: 100%; min-height: 0; background: linear-gradient(#b5b7b9, #c4c6c8 25%, #dcddde 65%, #e8e9ea); }

.s-ring { fill: none; stroke: #2a2010; stroke-width: .9; }
.s-triad path { fill: none; stroke: #e9dc8e; stroke-width: 1.500; }
.s-y { font: 13px "Liberation Sans", sans-serif; fill: #22118a; }
.s-dash { fill: none; stroke: #f2f2f2; stroke-width: 1.200; stroke-dasharray: 2 2; }
.s-d-blue { stroke: #2c5aa8; }
.s-d-lblue { stroke: #3f7ae0; }
.s-d-purple { stroke: #5f4a8c; }
.s-solid-blue { fill: none; stroke: #2f66c8; stroke-width: 1.200; }
.s-cage { fill: none; stroke: #e0dee4; stroke-width: 1.300; }
.s-v-blue circle { fill: #2f68c4; }
.s-v-purple circle { fill: #5a4585; }
.s-v-light circle { fill: #d6d6d4; }
.wm-big { font: 700 41px "Liberation Sans", "Noto Sans CJK SC", sans-serif; fill: #f1f2f3; }
.wm-small { font: 700 11px "Liberation Sans", sans-serif; fill: #f1f2f3; }
```
